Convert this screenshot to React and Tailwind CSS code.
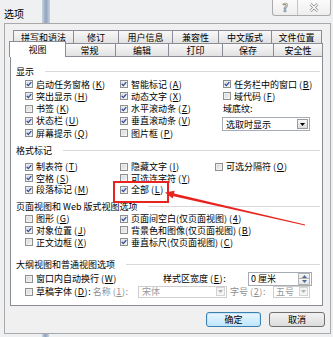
import React from "react";

const font = "font-['Noto_Sans_CJK_SC','Noto_Sans',sans-serif]";

function Mn({ m }) {
  return (
    <span className="ml-[2px] tracking-[0.6px]">
      (<span className="underline underline-offset-1">{m}</span>)
    </span>
  );
}

function Check({ on }) {
  return (
    <svg width="8" height="8" viewBox="0 0 8 8" className="shrink-0">
      <rect x="0.5" y="0.5" width="7" height="7" fill="url(#cbg)" stroke="#8f8f8f" />
      <rect x="1.5" y="1.5" width="5" height="5" fill="none" stroke="#f4f4f4" strokeWidth="0.6" />
      {on && (
        <path d="M1.7 3.9 L3.3 5.6 L6.3 2.1" fill="none" stroke="#2d4a9c" strokeWidth="1.3" />
      )}
    </svg>
  );
}

function Item({ t, m, on, h }) {
  return (
    <div className={`flex items-center gap-[3px] whitespace-nowrap leading-none ${h}`}>
      <Check on={on} />
      <span>
        {t}
        {m && <Mn m={m} />}
      </span>
    </div>
  );
}

function Header({ t }) {
  return (
    <div className="flex h-[12px] items-center pl-[5px] pr-[2px] leading-none">
      <span className="whitespace-nowrap">{t}</span>
      <div className="ml-[11px] h-px flex-1 bg-[#d9d9d9]" />
    </div>
  );
}

function Arrow({ color = "#000" }) {
  return (
    <svg width="5" height="3" viewBox="0 0 5 3">
      <path d="M0 0H5L2.5 3Z" fill={color} />
    </svg>
  );
}

const row1 = [
  ["拼写和语法", "w-[61px]"],
  ["修订", "w-[46px]"],
  ["用户信息", "w-[55px]"],
  ["兼容性", "w-[47px]"],
  ["中文版式", "w-[54px]"],
  ["文件位置", "w-[51px]"],
];
const row2 = [
  ["常规", "w-[53px]"],
  ["编辑", "w-[54px]"],
  ["打印", "w-[55px]"],
  ["保存", "w-[52px]"],
  ["安全性", "w-[50px]"],
];

const tabCls =
  "flex h-[13px] items-center justify-center border border-b-0 border-[#898c95] bg-gradient-to-b from-[#f8f8f8] to-[#e2e2e2] leading-none whitespace-nowrap";

export default function App() {
  const H1 = "h-[12.25px]";
  const H2 = "h-[11.65px]";
  const H3 = "h-[11.85px]";
  return (
    <div className={`relative h-[337px] w-[333px] overflow-hidden bg-[#eef0f2] text-[9px] text-black ${font}`}>
      <svg width="0" height="0" className="absolute">
        <defs>
          <linearGradient id="cbg" x1="0" y1="0" x2="1" y2="1">
            <stop offset="0" stopColor="#cfd3d9" />
            <stop offset="1" stopColor="#f8f8f8" />
          </linearGradient>
        </defs>
      </svg>

      {/* title bar */}
      <div className="flex h-[23px] justify-between">
        <div className="pl-[4px] pt-[8px] text-[10px] leading-[11px]">选项</div>
        <div className="mr-[2px] flex h-[16px] w-[59px] rounded-b-[3px] border border-t-0 border-[#ababab] bg-gradient-to-b from-[#fbfbfb] to-[#eeeeee]">
          <div className="flex w-[25px] items-center justify-center border-r border-[#c4c4c4] text-[11px] font-bold leading-none text-white [-webkit-text-stroke:0.7px_#7d7d7d]">
            ?
          </div>
          <div className="flex flex-1 items-center justify-center">
            <svg width="10" height="9" viewBox="0 0 10 9">
              <path d="M1.5 1 L8.5 8 M8.5 1 L1.5 8" stroke="#8a8a8a" strokeWidth="2.6" />
              <path d="M1.5 1 L8.5 8 M8.5 1 L1.5 8" stroke="#ffffff" strokeWidth="1.2" />
            </svg>
          </div>
        </div>
      </div>

      {/* client frame */}
      <div className="ml-[4px] mr-[2px] h-[311px] border border-[#a9a9a9] bg-[#f0f0f0] pt-[6px]">
        {/* tab row 1 */}
        <div className="flex pl-[8px]">
          {row1.map(([t, w], i) => (
            <div key={t} className={`${tabCls} ${w} ${i ? "-ml-px" : ""}`}>
              {t}
            </div>
          ))}
        </div>
        {/* tab row 2 */}
        <div className="flex h-[13px] items-start pl-[4px]">
          <div className="relative z-10 -mt-[2px] flex h-[16px] w-[57px] items-start justify-center border border-b-0 border-[#898c95] bg-white pt-[3px] leading-none">
            视图
          </div>
          {row2.map(([t, w], i) => (
            <div key={t} className={`${tabCls} ${w} ${i ? "-ml-px" : "-ml-[3px]"}`}>
              {t}
            </div>
          ))}
        </div>

        {/* panel */}
        <div className="ml-[5px] h-[250px] w-[313px] border border-[#898c95] bg-white pt-[8px]">
          {/* 显示 */}
          <Header t="显示" />
          <div className="mt-[1px] flex pl-[14px]">
            <div className="flex w-[95px] flex-col">
              <Item t="启动任务窗格" m="K" on h={H1} />
              <Item t="突出显示" m="H" on h={H1} />
              <Item t="书签" m="K" h={H1} />
              <Item t="状态栏" m="U" on h={H1} />
              <Item t="屏幕提示" m="Q" on h={H1} />
            </div>
            <div className="flex w-[103px] flex-col">
              <Item t="智能标记" m="A" on h={H1} />
              <Item t="动态文字" m="X" on h={H1} />
              <Item t="水平滚动条" m="Z" on h={H1} />
              <Item t="垂直滚动条" m="V" on h={H1} />
              <Item t="图片框" m="P" h={H1} />
            </div>
            <div className="flex flex-1 flex-col">
              <Item t="任务栏中的窗口" m="B" on h={H1} />
              <Item t="域代码" m="F" h={H1} />
              <div className="flex h-[12.25px] items-center leading-none">域底纹:</div>
              <div className="-ml-[1px] mt-[2.25px] flex h-[14px] w-[88px] items-center border border-[#a5acb5] bg-white pl-[3px] leading-none">
                <span className="flex-1">选取时显示</span>
                <div className="mr-[1px] flex h-[10px] w-[11px] items-center justify-center border border-[#9a9a9a] bg-gradient-to-b from-[#f7f7f7] to-[#dcdcdc]">
                  <Arrow />
                </div>
              </div>
            </div>
          </div>

          {/* 格式标记 */}
          <div className="mt-[5.25px]">
            <Header t="格式标记" />
          </div>
          <div className="mt-[4.4px] flex pl-[14px]">
            <div className="flex w-[95px] flex-col">
              <Item t="制表符" m="T" on h={H2} />
              <Item t="空格" m="S" on h={H2} />
              <Item t="段落标记" m="M" on h={H2} />
            </div>
            <div className="flex w-[95px] flex-col">
              <Item t="隐藏文字" m="I" h={H2} />
              <Item t="可选连字符" m="Y" h={H2} />
              <Item t="全部" m="L" on h={H2} />
            </div>
            <div className="flex flex-1 flex-col">
              <Item t="可选分隔符" m="O" h={H2} />
            </div>
          </div>

          {/* 页面视图 */}
          <div className="mt-[4.85px]">
            <Header t="页面视图和 Web 版式视图选项" />
          </div>
          <div className="flex pl-[14px]">
            <div className="flex w-[95px] flex-col">
              <Item t="图形" m="G" h={H3} />
              <Item t="对象位置" m="J" on h={H3} />
              <Item t="正文边框" m="X" h={H3} />
            </div>
            <div className="flex flex-1 flex-col">
              <Item t="页面间空白(仅页面视图)" m="4" on h={H3} />
              <Item t="背景色和图像(仅页面视图)" m="B" h={H3} />
              <Item t="垂直标尺(仅页面视图)" m="C" on h={H3} />
            </div>
          </div>

          {/* 大纲视图 */}
          <div className="mt-[10.75px]">
            <Header t="大纲视图和普通视图选项" />
          </div>
          <div className="mt-[1.8px] flex h-[12.5px] items-center pl-[14px] leading-none">
            <div className="w-[138px]">
              <Item t="窗口内自动换行" m="W" h="h-[12.5px]" />
            </div>
            <div className="w-[85px] whitespace-nowrap">
              样式区宽度<Mn m="E" />:
            </div>
            <div className="flex h-[14px] w-[64px] items-center border border-[#a5acb5] bg-white pl-[2px]">
              <span className="flex-1">0 厘米</span>
              <div className="mr-[1px] flex h-[12px] w-[12px] flex-col">
                <div className="flex flex-1 items-center justify-center border border-[#b5b5b5] bg-gradient-to-b from-[#f7f7f7] to-[#e4e4e4]">
                  <svg width="5" height="3" viewBox="0 0 5 3">
                    <path d="M0 3H5L2.5 0Z" fill="#4d6a9a" />
                  </svg>
                </div>
                <div className="-mt-px flex flex-1 items-center justify-center border border-[#b5b5b5] bg-gradient-to-b from-[#f7f7f7] to-[#e4e4e4]">
                  <Arrow color="#4d6a9a" />
                </div>
              </div>
            </div>
          </div>
          <div className="flex h-[13px] items-center pl-[14px] leading-none">
            <div className="flex w-[111px] items-center whitespace-nowrap">
              <Item t="草稿字体" m="D" h="h-[13px]" />
              <span>:</span>
              <span className="ml-[2px] text-[#8f8f8f]">
                名称<Mn m="1" />:
              </span>
            </div>
            <div className="ml-[2px] flex h-[12px] w-[89px] items-center border border-[#cfcfcf] bg-white pl-[3px] text-[#9a9a9a]">
              <span className="flex-1">宋体</span>
              <div className="mr-[1px] flex h-[9px] w-[9px] items-center justify-center border border-[#d4d4d4] bg-[#f4f4f4]">
                <Arrow color="#b0b0b0" />
              </div>
            </div>
            <div className="ml-[3px] w-[43px] whitespace-nowrap text-[#8f8f8f]">
              字号<Mn m="2" />:
            </div>
            <div className="flex h-[12px] w-[37px] items-center border border-[#cfcfcf] bg-white pl-[2px] text-[#9a9a9a]">
              <span className="flex-1">五号</span>
              <div className="mr-[1px] flex h-[9px] w-[9px] items-center justify-center border border-[#d4d4d4] bg-[#f4f4f4]">
                <Arrow color="#b0b0b0" />
              </div>
            </div>
          </div>
        </div>

        {/* buttons */}
        <div className="mt-[6px] flex justify-end gap-[8px] pr-[5px] leading-none">
          <div className="flex h-[15px] w-[55px] items-center justify-center rounded-[3px] border border-[#3c7fb1] bg-gradient-to-b from-[#eaf6fd] to-[#bee6fd] shadow-[inset_0_0_0_1px_#c4e5f6]">
            确定
          </div>
          <div className="flex h-[15px] w-[56px] items-center justify-center rounded-[3px] border border-[#707070] bg-gradient-to-b from-[#f2f2f2] to-[#dcdcdc]">
            取消
          </div>
        </div>
      </div>

      {/* artifacts from the window behind */}
      <div className="absolute left-[42px] top-0 h-[23px] w-[8px] bg-gradient-to-r from-[#c9d3df] via-[#8fa4bf] to-[#c9d3df]" />
      <div className="absolute left-[42px] top-[334px] h-[3px] w-[7px] bg-gradient-to-r from-[#c9d3df] via-[#8fa4bf] to-[#c9d3df]" />

      {/* red annotation */}
      <div className="absolute left-[113px] top-[181px] h-[22px] w-[56px] border-2 border-[#e8231f]" />
      <svg className="pointer-events-none absolute left-0 top-0" width="333" height="337" viewBox="0 0 333 337">
        <polygon points="165,192.5 174.7,190.8 172.7,198.6" fill="#e8231f" />
        <polygon points="173,193.3 305,224.6 305,225.4 172.5,196" fill="#e8231f" />
      </svg>
    </div>
  );
}
